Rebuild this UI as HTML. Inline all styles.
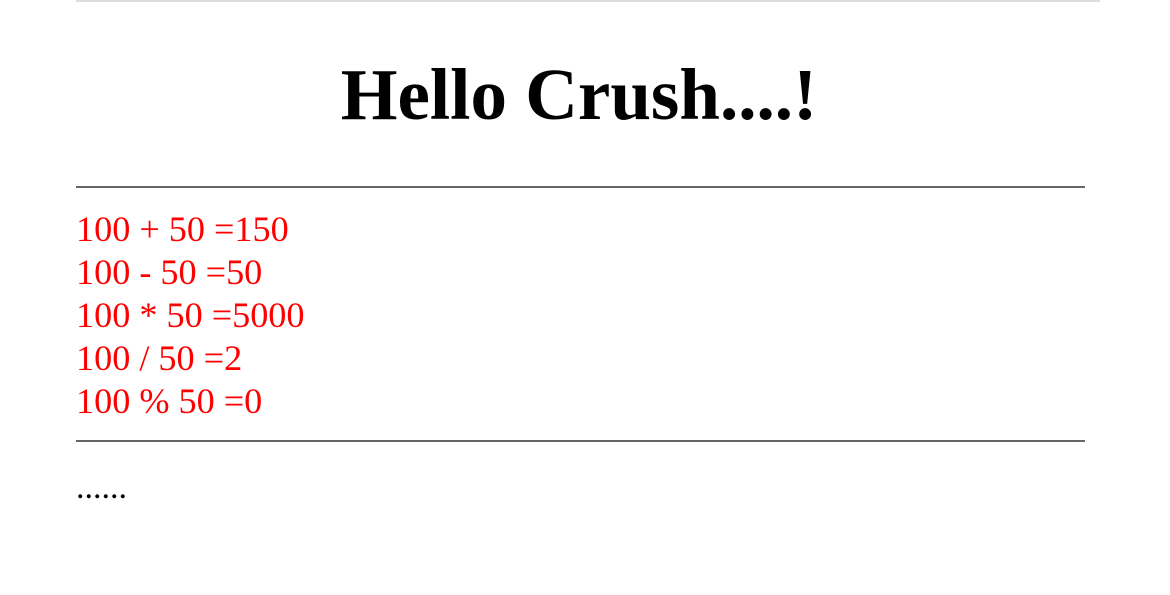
<!DOCTYPE html>
<html><head><style>
body{margin:0;background:#fff;font-family:"Liberation Serif",serif;}
.top{position:absolute;left:76px;top:0;width:1024px;height:2px;background:#ddd;}
h1{position:absolute;left:0;width:1158px;top:55px;margin:0;text-align:center;font-size:73px;line-height:80px;font-weight:bold;}
.hr{position:absolute;left:76px;width:1009px;height:2px;background:#666;}
.t{position:absolute;left:76px;top:208px;color:#f00;font-size:36.2px;line-height:43px;}
.d{position:absolute;left:76px;top:468px;font-size:34px;line-height:40px;}
</style></head><body>
<div class="top"></div>
<h1>Hello Crush....!</h1>
<div class="hr" style="top:186px"></div>
<div class="t">100 + 50 =150<br>100 - 50 =50<br>100 * 50 =5000<br>100 / 50 =2<br>100 % 50 =0</div>
<div class="hr" style="top:440px"></div>
<div class="d">......</div>
</body></html>
